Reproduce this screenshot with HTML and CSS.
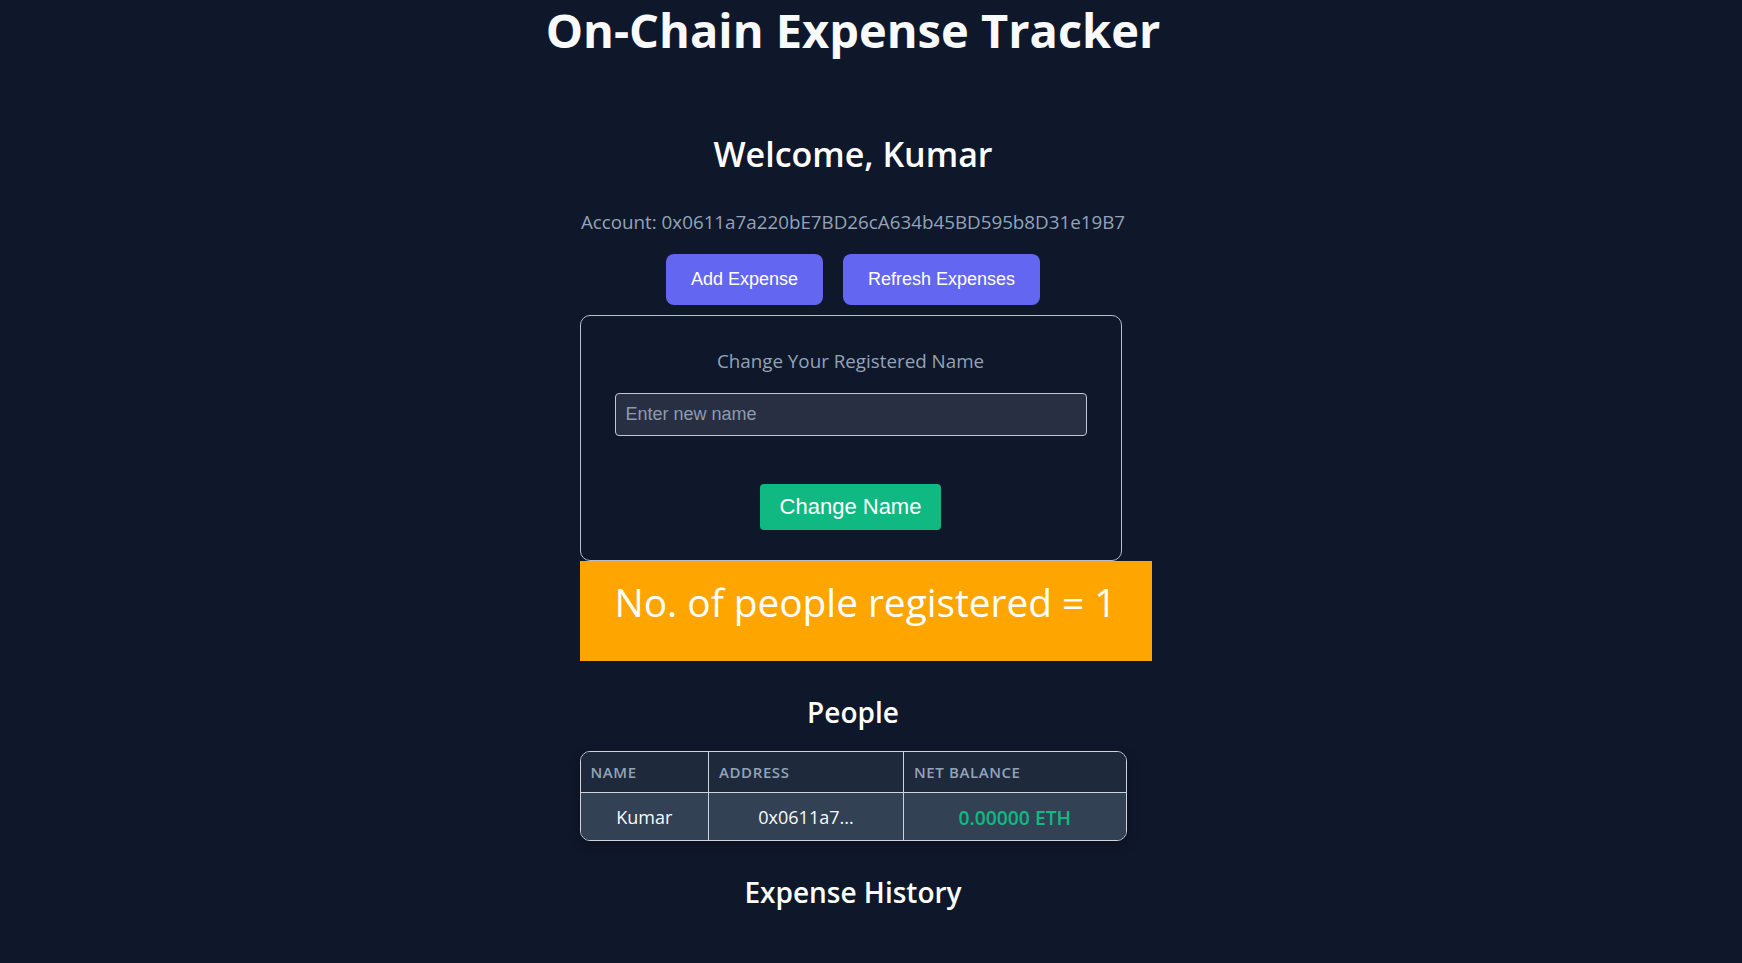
FILE: index.html
```html
<!DOCTYPE html>
<html lang="en">
<head>
<meta charset="utf-8">
<title>On-Chain Expense Tracker</title>
<link rel="stylesheet" href="styles.css">
</head>
<body>
<main class="app">
  <h1 class="title">On-Chain Expense Tracker</h1>
  <h2 class="welcome">Welcome, Kumar</h2>
  <p class="account">Account: 0x0611a7a220bE7BD26cA634b45BD595b8D31e19B7</p>
  <div class="actions">
    <button class="btn btn-primary" type="button">Add Expense</button>
    <button class="btn btn-primary btn-wide" type="button">Refresh Expenses</button>
  </div>
  <section class="stack">
    <div class="card">
      <p class="card-title">Change Your Registered Name</p>
      <input class="text-input" type="text" placeholder="Enter new name">
      <button class="btn btn-success" type="button">Change Name</button>
    </div>
    <div class="count">No. of people registered = 1</div>
  </section>
  <h3 class="section-title">People</h3>
  <div class="table-wrap">
    <table class="people">
      <colgroup>
        <col class="col-name">
        <col class="col-address">
        <col class="col-balance">
      </colgroup>
      <thead>
        <tr><th>Name</th><th>Address</th><th>Net Balance</th></tr>
      </thead>
      <tbody>
        <tr><td>Kumar</td><td>0x0611a7...</td><td class="positive">0.00000 ETH</td></tr>
      </tbody>
    </table>
  </div>
  <h3 class="section-title section-history">Expense History</h3>
</main>
</body>
</html>
```
FILE: styles.css
```css
* { box-sizing: border-box; }

html, body {
  margin: 0;
  padding: 0;
  background: #0f172a;
}

body {
  font-family: "Open Sans", "Noto Sans", sans-serif;
  color: #f8fafc;
  min-height: 963px;
}

.app {
  display: flex;
  flex-direction: column;
  align-items: center;
  padding-right: 36px;
}

.title {
  margin: 0;
  font-size: 47px;
  font-weight: 700;
  line-height: 60px;
  color: #f8fafc;
  white-space: nowrap;
}

.welcome {
  margin: 74px 0 0;
  font-size: 34px;
  font-weight: 600;
  line-height: 40px;
  color: #ffffff;
}

.account {
  margin: 36px 0 0;
  font-size: 18.8px;
  line-height: 24px;
  color: #94a3b8;
  white-space: nowrap;
}

.actions {
  display: flex;
  gap: 20px;
  margin-top: 20px;
}

.btn {
  border: none;
  color: #ffffff;
  font-family: "Liberation Sans", Arial, sans-serif;
  cursor: pointer;
}

.btn-primary {
  background: #6366f1;
  font-size: 18px;
  line-height: 21px;
  padding: 15px 25px;
  border-radius: 8px;
}

.stack {
  width: 547px;
  margin-top: 10px;
  display: flex;
  flex-direction: column;
  align-items: flex-start;
}

.card {
  width: 542px;
  border: 1px solid #b9bec8;
  border-radius: 10px;
  padding: 33px 34px 30px;
  display: flex;
  flex-direction: column;
  align-items: center;
}

.card-title {
  margin: 0;
  font-size: 18.8px;
  line-height: 24px;
  color: #94a3b8;
}

.text-input {
  width: 100%;
  margin-top: 20px;
  height: 43px;
  padding: 10px;
  font-family: "Liberation Sans", Arial, sans-serif;
  font-size: 18px;
  line-height: 21px;
  color: #e2e8f0;
  background: #292f42;
  border: 1px solid #c3c7cf;
  border-radius: 4px;
  outline: none;
}

.text-input::placeholder {
  color: #8c9bb1;
}

.btn-success {
  margin-top: 48px;
  background: #10b981;
  font-size: 22px;
  line-height: 26px;
  padding: 10px 20px;
  border-radius: 4px;
}

.count {
  width: 572px;
  flex-shrink: 0;
  background: #ffa500;
  color: #ffffff;
  font-size: 38.8px;
  line-height: 52px;
  padding: 15px 0 33px;
  text-align: center;
  white-space: nowrap;
}

.section-title {
  margin: 34px 0 0;
  font-size: 28px;
  font-weight: 600;
  line-height: 34px;
  color: #ffffff;
}

.table-wrap {
  width: 547px;
  margin-top: 22px;
  border: 1px solid #cfd4dc;
  border-radius: 10px;
  overflow: hidden;
  box-shadow: 0 4px 12px rgba(0, 0, 0, 0.3);
}

.people {
  width: 100%;
  border-collapse: collapse;
  table-layout: fixed;
}

.col-name { width: 128px; }
.col-address { width: 195px; }

.people th {
  background: #1e293b;
  color: #94a3b8;
  font-size: 15px;
  font-weight: 600;
  line-height: 20px;
  letter-spacing: 0.6px;
  text-transform: uppercase;
  text-align: left;
  padding: 10px 10px;
}

.people td {
  background: #334155;
  color: #f8fafc;
  font-size: 18px;
  line-height: 25px;
  text-align: center;
  padding: 12px 10px 10px;
  border-top: 1px solid #cfd4dc;
  white-space: nowrap;
}

.people th + th,
.people td + td {
  border-left: 1px solid #cfd4dc;
}

.people td.positive {
  color: #10b981;
  font-size: 19.3px;
  font-weight: 600;
}
```
